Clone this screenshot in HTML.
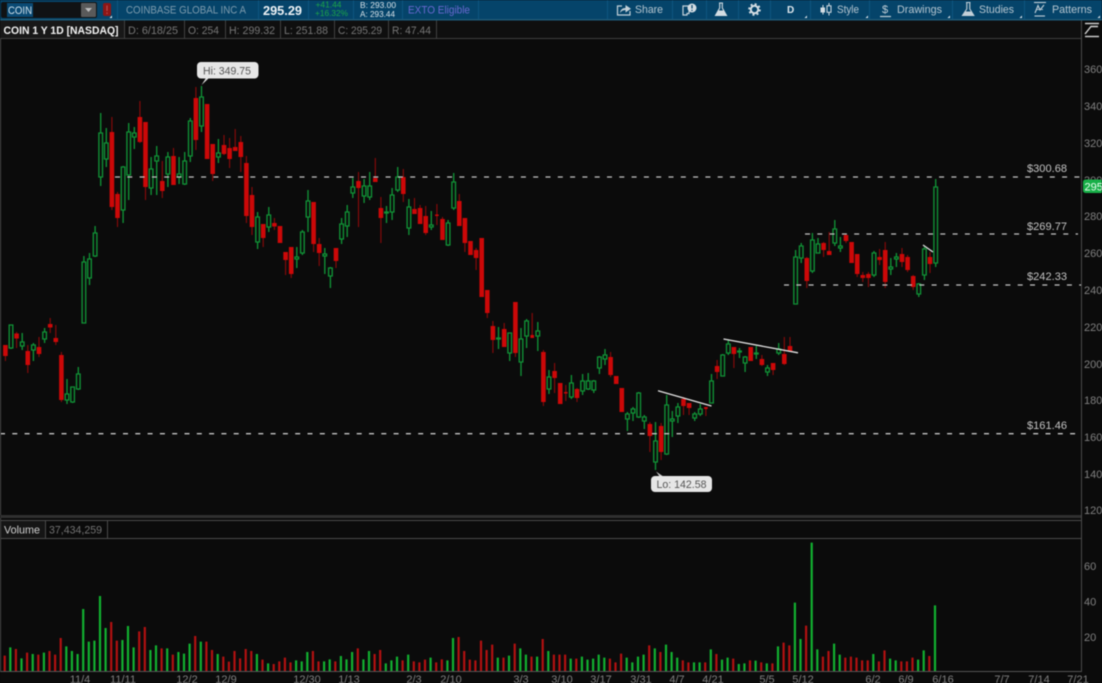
<!DOCTYPE html>
<html>
<head>
<meta charset="utf-8">
<style>
html,body{margin:0;padding:0;background:#0b0b0b;width:1102px;height:683px;overflow:hidden}
svg{display:block;filter:blur(.45px)}
text{font-family:"Liberation Sans",sans-serif}
</style>
</head>
<body>
<svg xmlns="http://www.w3.org/2000/svg" width="1102" height="683" viewBox="0 0 1102 683">
<rect width="1102" height="683" fill="#0b0b0b"/>

<!-- candles -->
<g transform="translate(.7 0)" fill="none">
<path stroke="#109236" stroke-width="1.35" d="M10.3 325V325h1.8V348h-3.6V325h1.8M10.3 348V349M21.5 333V342h1.8V346h-3.6V342h1.8M21.5 346V350M32.7 343V345h1.8V350h-3.6V345h1.8M32.7 350V361M43.9 328V332h1.8V339h-3.6V332h1.8M43.9 339V343M66.3 379V394h1.8V400h-3.6V394h1.8M66.3 400V404M71.9 387V387h1.8V402h-3.6V387h1.8M71.9 402V403M77.6 367V374h1.8V389h-3.6V374h1.8M77.6 389V390M83.2 256V262h1.8V323h-3.6V262h1.8M88.8 253V259h1.8V278h-3.6V259h1.8M88.8 278V285M94.4 226V233h1.8V256h-3.6V233h1.8M94.4 256V257M100 113V133h1.8V177h-3.6V133h1.8M100 177V186M105.6 128V143h1.8V159h-3.6V143h1.8M105.6 159V167M122.4 166V167h1.8V210h-3.6V167h1.8M122.4 210V223M128 123V132h1.8V175h-3.6V132h1.8M128 175V200M133.6 127V133h1.8V137h-3.6V133h1.8M133.6 137V149M150.4 157V169h1.8V188h-3.6V169h1.8M150.4 188V195M156 146V156h1.8V161h-3.6V156h1.8M156 161V195M167.2 152V157h1.8V174h-3.6V157h1.8M167.2 174V187M178.4 157V174h1.8V177h-3.6V174h1.8M178.4 177V184M184 152V161h1.8V184h-3.6V161h1.8M184 184V185M189.6 118V121h1.8V156h-3.6V121h1.8M189.6 156V162M200.8 86V97h1.8V126h-3.6V97h1.8M200.8 126V132M217.7 139V153h1.8V157h-3.6V153h1.8M217.7 157V163M256.9 212V217h1.8V242h-3.6V217h1.8M256.9 242V249M268.1 207V215h1.8V227h-3.6V215h1.8M268.1 227V232M296.1 247V257h1.8V259h-3.6V257h1.8M296.1 259V268M301.7 230V232h1.8V253h-3.6V232h1.8M301.7 253V255M307.3 190V201h1.8V217h-3.6V201h1.8M307.3 217V232M324.1 248V254h1.8V256h-3.6V254h1.8M324.1 256V274M329.7 267V268h1.8V276h-3.6V268h1.8M329.7 276V288M340.9 218V224h1.8V239h-3.6V224h1.8M340.9 239V244M346.5 205V212h1.8V226h-3.6V212h1.8M346.5 226V237M352.1 178V187h1.8V193h-3.6V187h1.8M352.1 193V198M363.4 179V186h1.8V196h-3.6V186h1.8M363.4 196V203M369 172V186h1.8V197h-3.6V186h1.8M369 197V200M385.8 206V212h1.8V213h-3.6V212h1.8M385.8 213V223M391.4 188V195h1.8V212h-3.6V195h1.8M391.4 212V220M397 167V177h1.8V190h-3.6V177h1.8M397 190V192M408.2 199V207h1.8V228h-3.6V207h1.8M408.2 228V235M430.6 211V225h1.8V227h-3.6V225h1.8M430.6 227V230M447.4 220V223h1.8V245h-3.6V223h1.8M447.4 245V246M453 173V182h1.8V208h-3.6V182h1.8M453 208V210M497.8 327V338h1.8V339h-3.6V338h1.8M497.8 339V349M509 333V333h1.8V353h-3.6V333h1.8M509 353V361M520.3 328V339h1.8V362h-3.6V339h1.8M520.3 362V376M525.9 319V321h1.8V336h-3.6V321h1.8M525.9 336V348M537.1 322V331h1.8V336h-3.6V331h1.8M537.1 336V351M548.3 370V377h1.8V389h-3.6V377h1.8M548.3 389V394M570.7 375V383h1.8V397h-3.6V383h1.8M570.7 397V399M581.9 374V381h1.8V391h-3.6V381h1.8M581.9 391V395M587.5 373V381h1.8V389h-3.6V381h1.8M587.5 389V390M593.1 380V381h1.8V390h-3.6V381h1.8M593.1 390V393M598.7 356V357h1.8V368h-3.6V357h1.8M598.7 368V374M604.3 349V355h1.8V359h-3.6V355h1.8M604.3 359V365M626.7 412V414h1.8V419h-3.6V414h1.8M626.7 419V431M632.3 407V409h1.8V413h-3.6V409h1.8M632.3 413V421M638 392V393h1.8V417h-3.6V393h1.8M638 417V418M643.6 415V417h1.8V421h-3.6V417h1.8M643.6 421V429M654.8 422V441h1.8V462h-3.6V441h1.8M654.8 462V470M666 395V405h1.8V454h-3.6V405h1.8M666 454V455M671.6 411V419h1.8V421h-3.6V419h1.8M671.6 421V437M677.2 403V407h1.8V416h-3.6V407h1.8M677.2 416V423M694 412V414h1.8V418h-3.6V414h1.8M694 418V421M699.6 404V409h1.8V414h-3.6V409h1.8M699.6 414V416M710.8 374V381h1.8V403h-3.6V381h1.8M722 354V355h1.8V376h-3.6V355h1.8M727.6 340V344h1.8V353h-3.6V344h1.8M727.6 353V355M738.8 348V351h1.8V352h-3.6V351h1.8M738.8 352V358M744.4 356V357h1.8V363h-3.6V357h1.8M744.4 363V372M755.6 346V353h1.8V354h-3.6V353h1.8M755.6 354V359M766.8 365V368h1.8V372h-3.6V368h1.8M766.8 372V376M778 343V349h1.8V353h-3.6V349h1.8M778 353V355M794.9 250V257h1.8V304h-3.6V257h1.8M800.5 243V246h1.8V258h-3.6V246h1.8M800.5 258V263M811.7 233V240h1.8V271h-3.6V240h1.8M811.7 271V273M817.3 238V244h1.8V253h-3.6V244h1.8M834.1 220V229h1.8V243h-3.6V229h1.8M834.1 243V246M839.7 237V246h1.8V248h-3.6V246h1.8M839.7 248V252M873.3 251V253h1.8V275h-3.6V253h1.8M873.3 275V277M890.1 258V267h1.8V269h-3.6V267h1.8M890.1 269V275M895.7 253V257h1.8V259h-3.6V257h1.8M895.7 259V267M918.1 283V284h1.8V294h-3.6V284h1.8M918.1 294V297M923.7 247V249h1.8V275h-3.6V249h1.8M923.7 275V280M935 179V187h1.8V263h-3.6V187h1.8M935 263V267"/>
<path stroke="#8c0a0a" stroke-width="1.1" d="M4.7 345V361M15.9 332V348M27.1 345V373M38.3 337V357M49.5 318V333M55.1 325V345M60.7 352V402M111.2 117V210M116.8 192V227M139.2 101V143M144.8 122V200M161.6 161V198M172.8 148V185M195.2 87V150M212 144V181M223.3 135V155M228.9 138V168M234.5 129V151M240.1 136V172M245.7 156V223M251.3 187V235M262.5 224V247M273.7 218V230M284.9 252V275M290.5 247V278M312.9 202V252M318.5 238V266M335.3 248V268M357.8 172V227M374.6 158V182M380.2 197V243M402.6 169V202M413.8 198V214M419.4 205V224M425 206V235M436.2 204V225M441.8 217V240M458.6 194V226M464.2 218V252M475.4 248V270M486.6 290V318M492.2 321V353M503.5 323V347M514.7 302V357M531.5 313V338M542.7 350V406M553.9 363V393M565.1 385V401M576.3 388V402M609.9 352V377M649.2 422V452M660.4 423V460M682.8 397V415M688.4 403V415M705.2 407V416M716.4 360V379M733.2 347V368M761.2 355V366M772.4 363V375M783.6 337V365M789.3 337V352M806.1 257V288M822.9 242V257M828.5 232V255M845.3 234V243M856.5 254V277M862.1 272V282M867.7 272V287M878.9 249V265M884.5 242V288M901.3 248V267M906.9 255V272M912.5 275V290M929.3 252V273"/>
<path stroke="#cc0808" stroke-width="4.6" d="M4.7 345V356M15.9 333.5V338.5M27.1 351V365M38.3 347V354M49.5 324V327.5M55.1 338V342M60.7 355V400M111.2 132V207M116.8 194V218M139.2 117V142M144.8 122V187M161.6 181V191M172.8 156V185M195.2 98V140M206.4 104V159M212 144V174M223.3 145V154M228.9 148V159M234.5 147V151M240.1 142V157M245.7 163V216M251.3 195V227M262.5 224V238M273.7 223V226.5M279.3 226V243M284.9 252V260M290.5 247V274M312.9 202V244M318.5 244V253M335.3 248V261M357.8 181V188M374.6 178V182M380.2 208V218M402.6 177V194M413.8 209V214M419.4 208V224M425 216V233M441.8 219V240M458.6 201V226M464.2 218V243M469.8 241V255M475.4 250V258M481 238V297M486.6 290V313M492.2 326V340M503.5 329V347M514.7 302V353M542.7 352V402M553.9 371V378M559.5 383V404M576.3 389V398M609.9 357V375M615.5 376V384M621.1 388V412M649.2 424V436M660.4 426V452M682.8 399V406M688.4 403V408M716.4 366V372M733.2 347V354M750 347V361M761.2 359V365M772.4 363V370M783.6 354V364M789.3 346V351M806.1 258V281M822.9 243V250M828.5 251V255M845.3 235V241M850.9 242V263M856.5 254V274M862.1 275V278M867.7 274V278M878.9 257V260M884.5 250V282M901.3 254V262M906.9 257V270M912.5 276V287M929.3 257V264"/>
<path stroke="#cc0808" stroke-width="3.6" d="M436.2 214.5V216M531.5 335V338M565.1 392V393.5M705.2 407V409"/>
</g>

<!-- dashed levels -->
<g stroke="#c4c4c4" stroke-width="1.3" stroke-dasharray="5 7.3" fill="none">
<path d="M115 177H1081"/>
<path d="M805 234H1078"/>
<path d="M784 285H1081"/>
<path d="M0 433.7H1081"/>
</g>
<!-- trend lines -->
<g stroke="#e2e2e2" stroke-width="1.3" fill="none">
<path d="M658 390.8L711.5 406"/>
<path d="M723.5 339L798 352.8"/>
<path d="M923 245L933 252"/>
</g>

<!-- Hi / Lo bubbles -->
<path d="M206 78L201.5 85L209 78z" fill="#e4e4e4"/>
<rect x="197" y="62" width="61.5" height="16.5" rx="4" fill="#e6e6e6"/>
<text x="203" y="74.5" font-size="11" fill="#555" textLength="48" lengthAdjust="spacingAndGlyphs">Hi: 349.75</text>
<path d="M656 471.5L660 477H664z" fill="#cfcfcf"/>
<rect x="651" y="476" width="61" height="16" rx="4" fill="#e6e6e6"/>
<text x="656.5" y="488" font-size="11" fill="#555" textLength="50" lengthAdjust="spacingAndGlyphs">Lo: 142.58</text>

<!-- $ labels -->
<g font-size="11" fill="#c4c4c4">
<text x="1027" y="172" textLength="40" lengthAdjust="spacingAndGlyphs">$300.68</text>
<text x="1027" y="230" textLength="40" lengthAdjust="spacingAndGlyphs">$269.77</text>
<text x="1027" y="280" textLength="40" lengthAdjust="spacingAndGlyphs">$242.33</text>
<text x="1027" y="429" textLength="40" lengthAdjust="spacingAndGlyphs">$161.46</text>
</g>

<!-- volume bars -->
<g transform="translate(0 510) scale(1 .33333)" fill="none" stroke-width="2.2">
<path stroke="#12b030" d="M10.3 483V412M21.5 483V445M32.7 483V432M43.9 483V428M66.3 483V409M71.9 483V423M77.6 483V432M83.2 483V297M88.8 483V395M94.4 483V392M100 483V258M105.6 483V354M122.4 483V390M128 483V348M133.6 483V412M150.4 483V420M156 483V406M167.2 483V415M178.4 483V426M184 483V431M189.6 483V401M200.8 483V395M217.7 483V432M256.9 483V432M268.1 483V460M296.1 483V451M301.7 483V454M307.3 483V426M324.1 483V454M329.7 483V448M340.9 483V438M346.5 483V448M352.1 483V426M363.4 483V448M369 483V423M385.8 483V460M391.4 483V451M397 483V440M408.2 483V434M430.6 483V443M447.4 483V451M453 483V384M497.8 483V443M509 483V437M520.3 483V415M525.9 483V434M537.1 483V440M548.3 483V423M570.7 483V446M581.9 483V440M587.5 483V449M593.1 483V446M598.7 483V434M604.3 483V443M626.7 483V443M632.3 483V457M638 483V440M643.6 483V434M654.8 483V415M666 483V404M671.6 483V426M677.2 483V443M694 483V457M699.6 483V457M710.8 483V418M722 483V449M727.6 483V443M738.8 483V462M744.4 483V460M755.6 483V452M766.8 483V460M778 483V409M794.9 483V278M800.5 483V387M811.7 483V98M817.3 483V418M834.1 483V401M839.7 483V434M873.3 483V432M890.1 483V446M895.7 483V451M918.1 483V449M923.7 483V421M935 483V286"/>
<path stroke="#b21010" d="M4.7 483V437M15.9 483V417M27.1 483V428M38.3 483V434M49.5 483V423M55.1 483V434M60.7 483V384M111.2 483V336M116.8 483V392M139.2 483V364M144.8 483V351M161.6 483V415M172.8 483V434M195.2 483V378M206.4 483V395M212 483V420M223.3 483V440M228.9 483V455M234.5 483V423M240.1 483V445M245.7 483V417M251.3 483V423M262.5 483V449M273.7 483V462M279.3 483V454M284.9 483V443M290.5 483V457M312.9 483V423M318.5 483V454M335.3 483V454M357.8 483V415M374.6 483V432M380.2 483V420M402.6 483V451M413.8 483V454M419.4 483V457M425 483V449M436.2 483V457M441.8 483V448M458.6 483V381M464.2 483V423M469.8 483V449M475.4 483V451M481 483V392M486.6 483V420M492.2 483V404M503.5 483V443M514.7 483V401M531.5 483V440M542.7 483V387M553.9 483V434M559.5 483V434M565.1 483V434M576.3 483V446M609.9 483V446M615.5 483V457M621.1 483V431M649.2 483V406M660.4 483V426M682.8 483V451M688.4 483V457M705.2 483V457M716.4 483V432M733.2 483V446M750 483V451M761.2 483V457M772.4 483V460M783.6 483V398M789.3 483V406M806.1 483V347M822.9 483V440M828.5 483V423M845.3 483V443M850.9 483V440M856.5 483V443M862.1 483V451M867.7 483V451M878.9 483V454M884.5 483V421M901.3 483V454M906.9 483V454M912.5 483V443M929.3 483V438"/>
</g>

<!-- axes and frames -->
<g fill="none" stroke="#4a4a4a" stroke-width="1">
<path d="M.5 38V671"/>
<path d="M1081.5 20V672"/>
<path d="M0 38.5H1081"/>
<path d="M0 520.5H1081"/>
<path d="M0 538.5H1081"/>
</g>
<rect x="0" y="515" width="1081" height="3" fill="#303030"/>
<path d="M0 671.5H1081" stroke="#555" stroke-width="1"/>

<!-- second row -->
<rect x="0" y="20" width="1081" height="18" fill="#0f0f0f"/>
<rect x="0" y="20" width="124" height="18" fill="#181818"/>
<g stroke="#404040" stroke-width="1" fill="none">
<path d="M124.5 20V38M184.5 20V38M225.5 20V38M280.5 20V38M334.5 20V38M388.5 20V38M436.5 20V38"/>
<path d="M0 38.5H1081"/>
</g>
<text x="3.5" y="34" font-size="11" font-weight="bold" fill="#f4f4f4" textLength="115" lengthAdjust="spacingAndGlyphs">COIN 1 Y 1D [NASDAQ]</text>
<g font-size="11" fill="#767676">
<text x="128" y="34" textLength="50" lengthAdjust="spacingAndGlyphs">D: 6/18/25</text>
<text x="188" y="34" textLength="31" lengthAdjust="spacingAndGlyphs">O: 254</text>
<text x="229" y="34" textLength="46" lengthAdjust="spacingAndGlyphs">H: 299.32</text>
<text x="284" y="34" textLength="44" lengthAdjust="spacingAndGlyphs">L: 251.88</text>
<text x="338" y="34" textLength="44" lengthAdjust="spacingAndGlyphs">C: 295.29</text>
<text x="392" y="34" textLength="39" lengthAdjust="spacingAndGlyphs">R: 47.44</text>
</g>

<!-- volume row -->
<rect x="1" y="521" width="44" height="17" fill="#151515"/>
<path d="M45.5 521V538M107.5 521V538" stroke="#4a4a4a" stroke-width="1"/>
<text x="4" y="533.5" font-size="11" fill="#d0d0d0" textLength="36" lengthAdjust="spacingAndGlyphs">Volume</text>
<text x="49" y="533.5" font-size="11" fill="#727272" textLength="53" lengthAdjust="spacingAndGlyphs">37,434,259</text>

<!-- price axis -->
<g font-size="11" fill="#808080">
<text x="1084" y="73">360</text>
<text x="1084" y="110">340</text>
<text x="1084" y="147">320</text>
<text x="1084" y="184">300</text>
<text x="1084" y="220">280</text>
<text x="1084" y="257">260</text>
<text x="1084" y="294">240</text>
<text x="1084" y="331">220</text>
<text x="1084" y="368">200</text>
<text x="1084" y="404">180</text>
<text x="1084" y="441">160</text>
<text x="1084" y="478">140</text>
<text x="1084" y="514">120</text>
<text x="1084" y="570">60</text>
<text x="1084" y="605.5">40</text>
<text x="1084" y="641">20</text>
<text x="1084" y="681">0</text>
</g>
<rect x="1082" y="672" width="20" height="11" fill="#0b0b0b"/>
<rect x="1083" y="179.5" width="20" height="13.5" rx="2.5" fill="#18b048"/>
<text x="1084.5" y="190.5" font-size="11" fill="#eafff0">295</text>

<!-- scale icon -->
<g fill="none" stroke="#d4d4d4" stroke-width="1.4">
<path d="M1085 23.5H1099"/>
<path d="M1085 36.5H1099"/>
<path d="M1085 34L1091 26.5H1098"/>
</g>

<!-- date labels -->
<g font-size="11" fill="#808080" text-anchor="middle">
<text x="80" y="683">11/4</text>
<text x="123" y="683">11/11</text>
<text x="187" y="683">12/2</text>
<text x="226" y="683">12/9</text>
<text x="307" y="683">12/30</text>
<text x="349" y="683">1/13</text>
<text x="414" y="683">2/3</text>
<text x="451" y="683">2/10</text>
<text x="521" y="683">3/3</text>
<text x="562" y="683">3/10</text>
<text x="601" y="683">3/17</text>
<text x="641" y="683">3/31</text>
<text x="677" y="683">4/7</text>
<text x="713" y="683">4/21</text>
<text x="767" y="683">5/5</text>
<text x="803" y="683">5/12</text>
<text x="873" y="683">6/2</text>
<text x="906" y="683">6/9</text>
<text x="943" y="683">6/16</text>
<text x="1002" y="683">7/7</text>
<text x="1039" y="683">7/14</text>
<text x="1078" y="683">7/21</text>
</g>

<!-- header -->
<rect x="0" y="0" width="1102" height="20" fill="#05446a"/>
<rect x="0" y="19" width="1102" height="1.5" fill="#1d5a78"/>
<g stroke="#0d5680" stroke-width="1">
<path d="M117.5 0V19M258.5 0V19M308.5 0V19M353.5 0V19M402.5 0V19M478.5 0V19M607.5 0V19M672.5 0V19M706.5 0V19M738.5 0V19M770.5 0V19M810.5 0V19M869.5 0V19M952.5 0V19M1024.5 0V19"/>
</g>
<rect x="1" y="2" width="96" height="16" rx="2" fill="#101214"/>
<rect x="7" y="3" width="26" height="14" fill="#0a4a74"/>
<text x="8" y="14" font-size="11" fill="#cfe0ea" textLength="24" lengthAdjust="spacingAndGlyphs">COIN</text>
<rect x="81" y="3" width="15" height="14" rx="1" fill="#5a5a5a"/>
<path d="M85 8H92L88.5 12z" fill="#bdbdbd"/>
<rect x="103" y="3" width="8" height="13" rx="2" fill="#8b1616"/>
<path d="M107 5.5V11M107 12.5V14" stroke="#b84a4a" stroke-width="1.2"/>
<path d="M112 18V15.5L109.5 18z" fill="#e0e8ee"/>
<text x="126" y="13.5" font-size="11" fill="#7d9bad" textLength="120" lengthAdjust="spacingAndGlyphs">COINBASE GLOBAL INC A</text>
<text x="263" y="15" font-size="13" font-weight="bold" fill="#eef3f6" textLength="39" lengthAdjust="spacingAndGlyphs">295.29</text>
<text x="315.5" y="7.5" font-size="8" fill="#1ca548" textLength="26" lengthAdjust="spacingAndGlyphs">+41.44</text>
<text x="315" y="16" font-size="8" fill="#1ca548" textLength="33" lengthAdjust="spacingAndGlyphs">+16.32%</text>
<text x="360" y="8" font-size="8.5" fill="#d8e2e8" textLength="36" lengthAdjust="spacingAndGlyphs">B: 293.00</text>
<text x="360" y="17" font-size="8.5" fill="#d8e2e8" textLength="35" lengthAdjust="spacingAndGlyphs">A: 293.44</text>
<text x="408" y="13.5" font-size="11" fill="#6a68d0" textLength="62" lengthAdjust="spacingAndGlyphs">EXTO Eligible</text>

<!-- right toolbar -->
<g font-size="11" fill="#b6c6d0">
<text x="635" y="13" textLength="28" lengthAdjust="spacingAndGlyphs">Share</text>
<text x="837" y="13" textLength="22" lengthAdjust="spacingAndGlyphs">Style</text>
<text x="897" y="13" textLength="45" lengthAdjust="spacingAndGlyphs">Drawings</text>
<text x="979" y="13" textLength="35" lengthAdjust="spacingAndGlyphs">Studies</text>
<text x="1052" y="13" textLength="40" lengthAdjust="spacingAndGlyphs">Patterns</text>
</g>
<text x="787" y="13" font-size="10" font-weight="bold" fill="#dfe8ee">D</text>
<!-- share -->
<g fill="none" stroke="#c3d0d8" stroke-width="1.2">
<path d="M622 6H617.5V15H630V11"/>
</g>
<path d="M620 13C620.5 9.5 622.5 8 625.5 8V5L631 8.8L625.5 12.5V10C623 10 621.3 11 620 13z" fill="#c3d0d8"/>
<!-- alert -->
<path d="M683 6H689V13.5H687V15H683z" fill="none" stroke="#c3d0d8" stroke-width="1.2"/>
<circle cx="692" cy="8" r="4.5" fill="#d4dde3"/>
<path d="M692 5V8.5M692 9.8V11" stroke="#05446a" stroke-width="1.2"/>
<!-- flask 1 -->
<path d="M719 3H723M719.7 3.5V8L715.5 15.5H726.5L722.3 8V3.5" fill="none" stroke="#d4dde3" stroke-width="1.1"/>
<path d="M718 10.5H724L726.5 15.5H715.5z" fill="#d4dde3"/>
<!-- gear -->
<circle cx="754.5" cy="9.5" r="3.7" fill="none" stroke="#d4dde3" stroke-width="2"/>
<circle cx="754.5" cy="9.5" r="5.4" fill="none" stroke="#d4dde3" stroke-width="1.8" stroke-dasharray="2 2.24"/>
<!-- style -->
<path d="M823 5V14.5" stroke="#d4dde3" stroke-width="1"/>
<rect x="820.5" y="7.5" width="4.5" height="5" fill="#d4dde3"/>
<path d="M829 3V15.5" stroke="#d4dde3" stroke-width="1"/>
<rect x="827" y="5.8" width="4" height="6.5" fill="#05446a" stroke="#d4dde3" stroke-width="1"/>
<!-- drawings -->
<text x="882" y="13" font-size="11" fill="#c3d0d8">$</text>
<path d="M880 16.5H891" stroke="#c3d0d8" stroke-width="1.2"/>
<!-- flask 2 -->
<path d="M966 2.5H970.5M966.8 3V9L962.5 15.5H973.8L969.8 9V3" fill="none" stroke="#c3d0d8" stroke-width="1.1"/>
<path d="M965.5 11.5H971L973.8 15.5H962.5z" fill="#c3d0d8"/>
<!-- patterns -->
<path d="M1034 2.5H1046" stroke="#c3d0d8" stroke-width="1.1"/>
<path d="M1034.5 16H1045" stroke="#c3d0d8" stroke-width="1.1"/>
<path d="M1035 13L1038 5.5L1040 10L1044 5" fill="none" stroke="#c3d0d8" stroke-width="1.1"/>
<path d="M1036 9.5H1043" stroke="#c3d0d8" stroke-width=".8"/>
<!-- corner markers -->
<g fill="#dbe4ea">
<path d="M807 18V15.5L804.5 18z"/>
<path d="M868 18V15.5L865.5 18z"/>
<path d="M950 18V15.5L947.5 18z"/>
<path d="M1022 18V15.5L1019.5 18z"/>
<path d="M1100 18V15.5L1097.5 18z"/>
</g>
</svg>
</body>
</html>
